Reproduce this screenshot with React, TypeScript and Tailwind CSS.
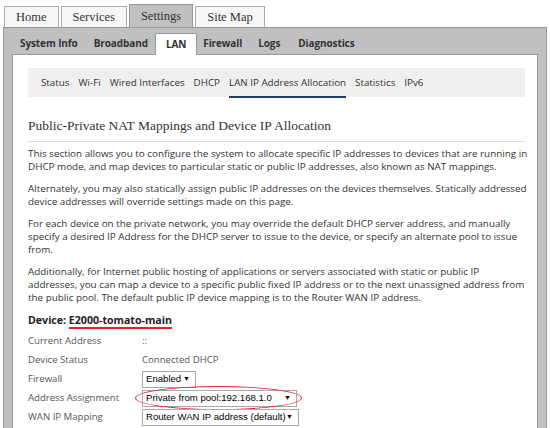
import React from "react";

const topTabs = ["Home", "Services", "Settings", "Site Map"];
const lanNav = ["Status", "Wi-Fi", "Wired Interfaces", "DHCP", "LAN IP Address Allocation", "Statistics", "IPv6"];

const paragraphs: string[][] = [
  [
    "This section allows you to configure the system to allocate specific IP addresses to devices that are running in",
    "DHCP mode, and map devices to particular static or public IP addresses, also known as NAT mappings.",
  ],
  [
    "Alternately, you may also statically assign public IP addresses on the devices themselves. Statically addressed",
    "device addresses will override settings made on this page.",
  ],
  [
    "For each device on the private network, you may override the default DHCP server address, and manually",
    "specify a desired IP Address for the DHCP server to issue to the device, or specify an alternate pool to issue",
    "from.",
  ],
  [
    "Additionally, for Internet public hosting of applications or servers associated with static or public IP",
    "addresses, you can map a device to a specific public fixed IP address or to the next unassigned address from",
    "the public pool. The default public IP device mapping is to the Router WAN IP address.",
  ],
];

const sans = { fontFamily: "'Open Sans', sans-serif" };

function Select({ value, width, circled }: { value: string; width: string; circled?: boolean }) {
  return (
    <div className="relative">
      {circled && (
        <div className="absolute left-[-7px] right-[-5px] top-[-4px] bottom-[-3px] rounded-[50%] border-[1.5px] border-[#e8202a]" />
      )}
      <div
        className={`${width} h-[17px] flex items-center justify-between whitespace-nowrap border border-[#a9a9a9] bg-white pl-[3px] pr-[5px] text-[9.6px] text-black`}
        style={{ fontFamily: "'Liberation Sans', Arial, sans-serif" }}
      >
        <span>{value}</span>
        <span className="text-[7px]">▼</span>
      </div>
    </div>
  );
}

export default function App() {
  return (
    <div className="w-[550px] h-[428px] overflow-hidden bg-white text-[#333]">
      {/* top tabs */}
      <div className="flex items-end gap-[2px] pl-[4px] h-[27px]" style={{ fontFamily: "'Liberation Serif', Georgia, serif" }}>
        {topTabs.map((t) => (
          <div
            key={t}
            className={
              t === "Settings"
                ? "h-[23px] px-[11px] flex items-center border border-b-0 border-[#999] bg-[#c0c0c0] text-[12.5px] text-[#333]"
                : "h-[21px] px-[11px] flex items-center border border-b-0 border-[#aaa] bg-[#f6f6f6] text-[12.5px] text-[#333]"
            }
          >
            {t}
          </div>
        ))}
      </div>

      {/* gray panel */}
      <div className="mx-[3px] h-[401px] border border-b-0 border-[#999] bg-[#c0c0c0] flex flex-col">
        <div className="shrink-0 h-[26px] flex items-end pl-[16px] text-[10px] font-bold tracking-[-0.1px] text-[#333]" style={sans}>
          <div className="h-[21px] flex items-center">System Info</div>
          <div className="h-[21px] flex items-center ml-[16px]">Broadband</div>
          <div className="relative top-[1px] ml-[7px] h-[22px] px-[10px] flex items-center bg-white border border-b-0 border-[#999]">
            LAN
          </div>
          <div className="h-[21px] flex items-center ml-[6px]">Firewall</div>
          <div className="h-[21px] flex items-center ml-[16px]">Logs</div>
          <div className="h-[21px] flex items-center ml-[18px]">Diagnostics</div>
        </div>

        <div className="flex-1 min-h-0 overflow-hidden ml-[8px] mr-[8px] bg-white border-l border-t border-r border-[#999] pl-[15px] pr-[12px] pt-[13px]">
          <div className="h-[29px] bg-[#efefef] flex items-stretch gap-[9px] pl-[13px] text-[9.8px] text-[#333]" style={sans}>
            {lanNav.map((n) => (
              <div key={n} className="flex items-center">
                <span
                  className={
                    n === "LAN IP Address Allocation"
                      ? "h-full flex items-center border-b-2 border-[#1f3a6e] mb-[-1px] pt-[2px]"
                      : "h-full flex items-center pt-[1px]"
                  }
                >
                  {n}
                </span>
              </div>
            ))}
          </div>

          <div
            className="mt-[19px] pb-[5px] border-b border-[#ddd] text-[13.5px] text-[#333]"
            style={{ fontFamily: "'Liberation Serif', Georgia, serif" }}
          >
            Public-Private NAT Mappings and Device IP Allocation
          </div>

          <div className="mt-[5px] flex flex-col gap-[9px] text-[9.86px] leading-[13px] text-[#333]" style={sans}>
            {paragraphs.map((p, i) => (
              <p key={i} className="whitespace-nowrap">
                {p.map((line, j) => (
                  <React.Fragment key={j}>
                    {line}
                    {j < p.length - 1 && <br />}
                  </React.Fragment>
                ))}
              </p>
            ))}
          </div>

          <div className="mt-[9px] text-[10.6px] font-bold text-[#222]" style={sans}>
            Device: <span className="border-b-2 border-[#e8202a]">E2000-tomato-main</span>
          </div>

          <div className="mt-[3px] grid grid-cols-[114px_1fr] items-center text-[9.6px] text-[#555]" style={sans}>
            <div className="h-[19px] flex items-center">Current Address</div>
            <div className="h-[19px] flex items-center">::</div>
            <div className="h-[19px] flex items-center">Device Status</div>
            <div className="h-[19px] flex items-center">Connected DHCP</div>
            <div className="h-[19px] flex items-center">Firewall</div>
            <div className="h-[19px] flex items-center">
              <Select value="Enabled" width="w-[54px]" />
            </div>
            <div className="h-[19px] flex items-center">Address Assignment</div>
            <div className="h-[19px] flex items-center">
              <Select value="Private from pool:192.168.1.0" width="w-[155px]" circled />
            </div>
            <div className="h-[19px] flex items-center">WAN IP Mapping</div>
            <div className="h-[19px] flex items-center">
              <Select value="Router WAN IP address (default)" width="w-[157px]" />
            </div>
          </div>
        </div>
      </div>
    </div>
  );
}
